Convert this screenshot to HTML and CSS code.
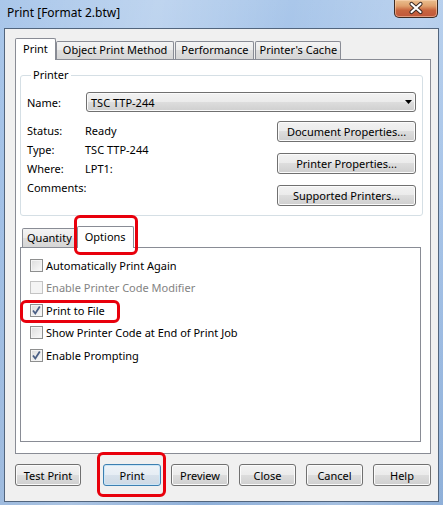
FILE: index.html
```html
<!DOCTYPE html>
<html>
<head>
<meta charset="utf-8">
<title>Print</title>
<link rel="stylesheet" href="styles.css">
</head>
<body>
<div class="window">
  <div class="titlebar">
    <span class="title">Print [Format 2.btw]</span>
    <div class="close-btn">
      <svg width="44" height="18" viewBox="0 0 44 18">
        <path d="M17.5 5 L26.5 13 M26.5 5 L17.5 13" stroke="#3b2a24" stroke-width="4.2" stroke-linecap="round" fill="none"/>
        <path d="M17.5 5 L26.5 13 M26.5 5 L17.5 13" stroke="#ffffff" stroke-width="2.2" stroke-linecap="round" fill="none"/>
      </svg>
    </div>
  </div>
  <div class="client">
    <div class="tabs">
      <div class="tab-strip">
        <div class="tab active tab-print">Print</div>
        <div class="tab tab-opm">Object Print Method</div>
        <div class="tab">Performance</div>
        <div class="tab tab-cache">Printer's Cache</div>
      </div>
      <div class="tab-panel">
        <fieldset class="group">
          <legend>Printer</legend>
          <div class="name-row">
            <span class="name-lbl">Name:</span>
            <div class="combo">
              <span>TSC TTP-244</span>
              <svg class="arrow" width="7" height="4" viewBox="0 0 7 4"><path d="M0 0 H7 L3.5 4 Z" fill="#000"/></svg>
            </div>
          </div>
          <div class="info">
            <div class="props">
              <span>Status:</span><span>Ready</span>
              <span>Type:</span><span>TSC TTP-244</span>
              <span>Where:</span><span>LPT1:</span>
              <span>Comments:</span><span></span>
            </div>
            <div class="side-buttons">
              <div class="btn">Document Properties...</div>
              <div class="btn">Printer Properties...</div>
              <div class="btn">Supported Printers...</div>
            </div>
          </div>
        </fieldset>
        <div class="subtabs">
          <div class="tab-strip sub-strip">
            <div class="tab sub-qty">Quantity</div>
            <div class="tab active sub-opt">Options</div>
          </div>
          <div class="sub-panel">
            <div class="check"><span class="box"></span>Automatically Print Again</div>
            <div class="check disabled"><span class="box"></span>Enable Printer Code Modifier</div>
            <div class="check"><span class="box checked"><svg width="11" height="11" viewBox="0 0 11 11"><path d="M2 5.5 L4.3 8.5 L8.8 1.5" stroke="#4a5f85" stroke-width="1.8" fill="none"/></svg></span>Print to File</div>
            <div class="check"><span class="box"></span>Show Printer Code at End of Print Job</div>
            <div class="check"><span class="box checked"><svg width="11" height="11" viewBox="0 0 11 11"><path d="M2 5.5 L4.3 8.5 L8.8 1.5" stroke="#4a5f85" stroke-width="1.8" fill="none"/></svg></span>Enable Prompting</div>
          </div>
        </div>
      </div>
    </div>
    <div class="buttons">
      <div class="btn b-test">Test Print</div>
      <div class="btn b-print default">Print</div>
      <div class="btn b-std">Preview</div>
      <div class="btn b-narrow">Close</div>
      <div class="btn b-narrow">Cancel</div>
      <div class="btn b-std">Help</div>
    </div>
  </div>
  <div class="highlight hl-options"></div>
  <div class="highlight hl-file"></div>
  <div class="highlight hl-print"></div>
</div>
</body>
</html>
```

FILE: styles.css
```css
* { box-sizing: border-box; }

body {
  margin: 0;
  font-family: "Noto Sans", "Open Sans", sans-serif;
  font-size: 11px;
  color: #000;
}

.window {
  position: relative;
  width: 443px;
  height: 505px;
  overflow: hidden;
  background:
    linear-gradient(100deg, rgba(255,255,255,0) 0%, rgba(255,255,255,0.25) 30%, rgba(255,255,255,0) 55%, rgba(255,255,255,0.2) 80%, rgba(255,255,255,0) 100%),
    linear-gradient(180deg, #aac7ea 0%, #9dbde5 40%, #8fb0d9 100%);
}

.titlebar {
  height: 28px;
  display: flex;
  justify-content: space-between;
  align-items: flex-start;
  padding: 0 5px 0 7px;
}

.title {
  font-size: 12px;
  line-height: 26px;
  color: #000;
}

.close-btn {
  width: 44px;
  height: 18px;
  border: 1px solid #3d2a22;
  border-top: none;
  border-radius: 0 0 5px 5px;
  background: linear-gradient(180deg, #e9bf8f 0%, #e0a06d 35%, #c8653e 60%, #c0573a 100%);
  box-shadow: inset 0 0 0 1px rgba(255, 220, 190, 0.5);
  overflow: hidden;
}
.close-btn svg { display: block; margin: -1px 0 0 -1px; }

.client {
  margin-left: 4px;
  width: 435px;
  height: 474px;
  border: 1px solid #52657d;
  background: #f0f0f0;
  display: flex;
  flex-direction: column;
}

.tabs {
  padding: 9px 7px 0 10px;
}

.tab-strip {
  display: flex;
  align-items: flex-end;
  height: 21px;
}

.tab {
  height: 18px;
  line-height: 16px;
  padding: 0 5px;
  border: 1px solid #898c95;
  border-bottom: none;
  margin-right: 1px;
  border-radius: 2px 2px 0 0;
  background: linear-gradient(180deg, #f4f4f4 0%, #ebebeb 50%, #dedede 50%, #d6d6d6 100%);
  white-space: nowrap;
}

.tab.active {
  height: 22px;
  line-height: 20px;
  background: #fff;
  margin-bottom: -1px;
  position: relative;
  z-index: 1;
}

.tab-print { padding: 0 7px; margin-right: 0; }
.tab-opm { padding: 0 6px; }
.tab-cache { padding: 0 3px; }

.tab-panel {
  width: 416px;
  height: 395px;
  border: 1px solid #898c95;
  background: #fff;
}

.group {
  margin: 8px 7px 0 4px;
  padding: 0 6px;
  height: 148px;
  border: 1px solid #d5dfe5;
  border-radius: 3px;
  min-width: 0;
}

.group legend {
  padding: 0 2px;
  margin-left: 4px;
  line-height: 14px;
  color: #000;
}

.name-row {
  display: flex;
  align-items: center;
  margin-top: 10px;
  height: 20px;
}

.name-lbl { width: 59px; }

.combo {
  flex: 1;
  height: 20px;
  display: flex;
  align-items: center;
  justify-content: space-between;
  padding: 0 3px 0 4px;
  border: 1px solid #707070;
  border-radius: 3px;
  background: linear-gradient(180deg, #f2f2f2 0%, #ebebeb 50%, #dddddd 50%, #cfcfcf 100%);
  box-shadow: inset 0 0 0 1px #fafafa;
}

.combo .arrow { display: block; margin-right: 0; }

.info {
  display: flex;
  justify-content: space-between;
  margin-top: 9px;
}

.props {
  display: grid;
  grid-template-columns: 58px auto;
  grid-auto-rows: 19px;
  line-height: 19px;
}

.side-buttons {
  width: 139px;
  display: flex;
  flex-direction: column;
  gap: 11px;
}

.btn {
  height: 21px;
  display: flex;
  align-items: center;
  justify-content: center;
  border: 1px solid #707070;
  border-radius: 3px;
  background: linear-gradient(180deg, #f2f2f2 0%, #ebebeb 50%, #dddddd 50%, #cfcfcf 100%);
  box-shadow: inset 0 0 0 1px #fbfbfb;
  white-space: nowrap;
}

.subtabs {
  margin: 9px 0 0 4px;
}

.sub-strip {
  height: 22px;
  padding-left: 2px;
}

.sub-qty {
  height: 19px;
  line-height: 17px;
  padding: 0 4px;
  margin-right: 0;
}

.sub-opt {
  height: 23px;
  line-height: 21px;
  padding: 0 7px;
}

.sub-panel {
  width: 401px;
  height: 195px;
  border: 1px solid #898c95;
  background: #fff;
  padding: 6px 0 0 9px;
}

.check {
  height: 22.5px;
  display: flex;
  align-items: center;
}

.check.disabled { color: #838383; }

.box {
  width: 13px;
  height: 13px;
  margin-right: 3px;
  border: 1px solid #8e8f8f;
  background: linear-gradient(135deg, #dcdcdc 0%, #eeeeee 60%, #fafafa 100%);
  box-shadow: inset 0 0 0 1px #f4f4f4;
  display: flex;
  align-items: center;
  justify-content: center;
}

.check.disabled .box {
  border-color: #c4c4c4;
  background: #f4f4f4;
  box-shadow: none;
}

.box svg { display: block; }

.buttons {
  display: flex;
  margin-top: 10px;
  padding-left: 10px;
}

.buttons .btn { height: 22px; }

.b-test { width: 66px; }
.b-print { width: 58px; margin-left: 22px; }
.b-std { width: 58px; margin-left: 10px; }
.b-narrow { width: 57px; margin-left: 10px; }

.btn.default {
  border-color: #3c7fb1;
  background: linear-gradient(180deg, #eef3f8 0%, #e6edf4 50%, #d7e1eb 50%, #cdd9e5 100%);
  box-shadow: inset 0 0 0 1px #cbe6f7;
}

.highlight {
  position: absolute;
  border: 3px solid #e8000c;
  border-radius: 6px;
}

.hl-options { left: 74px; top: 215px; width: 64px; height: 40px; }
.hl-file { left: 20px; top: 300px; width: 100px; height: 23px; }
.hl-print { left: 97px; top: 452px; width: 69px; height: 45px; }
```
